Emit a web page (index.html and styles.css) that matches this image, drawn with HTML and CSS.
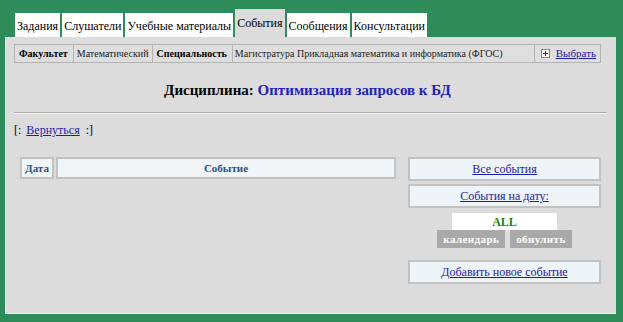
FILE: index.html
```html
<!DOCTYPE html>
<html lang="ru">
<head>
  <meta charset="UTF-8">
  <title>События</title>
  <link rel="stylesheet" href="styles.css">
</head>
<body>
  <div class="page">
    <div class="tabs">
      <a class="tab" href="#">Задания</a>
      <a class="tab" href="#">Слушатели</a>
      <a class="tab" href="#">Учебные материалы</a>
      <a class="tab active" href="#">События</a>
      <a class="tab" href="#">Сообщения</a>
      <a class="tab" href="#">Консультации</a>
    </div>
    <div class="panel">
      <table class="info">
        <tr>
          <td class="lbl">Факультет</td>
          <td class="val">Математический</td>
          <td class="lbl">Специальность</td>
          <td class="wide">Магистратура Прикладная математика и информатика (ФГОС)</td>
          <td class="pick">
            <svg class="plus" width="9" height="9" viewBox="0 0 9 9">
              <rect x="0.5" y="0.5" width="8" height="8" fill="#fff" stroke="#888"/>
              <path d="M2 4.5h5M4.5 2v5" stroke="#333" stroke-width="1"/>
            </svg>
            <a href="#">Выбрать</a>
          </td>
        </tr>
      </table>

      <h2 class="title">Дисциплина: <span>Оптимизация запросов к БД</span></h2>
      <hr class="sep">

      <div class="back">[: <a href="#">Вернуться</a> :]</div>

      <div class="events">
        <div class="ev-head">
          <div class="ev-cell date">Дата</div>
          <div class="ev-cell name">Событие</div>
        </div>
        <div class="side">
          <div class="side-box"><a href="#">Все события</a></div>
          <div class="side-box"><a href="#">События на дату:</a></div>
          <div class="date-val">ALL</div>
          <div class="date-btns">
            <span class="gbtn cal">календарь</span>
            <span class="gbtn">обнулить</span>
          </div>
          <div class="side-box add"><a href="#">Добавить новое событие</a></div>
        </div>
      </div>
    </div>
  </div>
</body>
</html>
```

FILE: styles.css
```css
body {
  margin: 0;
  background-color: #2e8c5a;
  font-family: 'Liberation Serif', 'Times New Roman', serif;
  color: #000;
}
a {
  color: #1d1daa;
}
.page {
  padding-top: 9px;
  width: 623px;
  height: 322px;
  box-sizing: border-box;
}
.tabs {
  display: flex;
  align-items: flex-end;
  gap: 2px;
  margin-left: 15px;
}
.tab {
  display: block;
  background: #fff;
  color: #000;
  text-decoration: none;
  font-size: 12px;
  line-height: 14px;
  padding: 6px 2px 4px;
}
.tab.active {
  background: #dcdcdc;
  padding: 7px 2px 7px;
}
.panel {
  margin-left: 5px;
  width: 611px;
  height: 277px;
  box-sizing: border-box;
  background: #dcdcdc;
  border-left: 1px solid #ececec;
  border-bottom: 1px solid #ececec;
  padding: 7px 15px 0 8px;
}
.info {
  width: 100%;
  border-collapse: collapse;
  border: 1px solid #b4b4b4;
  font-size: 10px;
  line-height: 13px;
}
.info td {
  border: 1px solid #b4b4b4;
  padding: 2px 3px;
  white-space: nowrap;
  width: 1%;
  background: #dedede;
  color: #222;
}
.info td.lbl {
  font-weight: bold;
  color: #000;
  padding: 2px 5px 2px 4px;
}
.info td.wide {
  width: auto;
  padding-left: 2px;
}
.info td.pick {
  padding: 2px 4px 2px 6px;
  font-size: 11px;
}
.plus {
  vertical-align: -1px;
  margin-right: 3px;
}
.title {
  margin: 18px 0 0;
  text-align: center;
  font-size: 15px;
  line-height: 18px;
}
.title span {
  color: #1f1fc4;
}
.sep {
  margin: 13px -6px 0 0;
  border: none;
  border-top: 1px solid #b0b0b0;
  border-bottom: 1px solid #f4f4f4;
  height: 0;
}
.back {
  margin-top: 9px;
  font-size: 12px;
  line-height: 14px;
}
.back a {
  margin: 0 3px 0 2px;
}
.events {
  display: flex;
  align-items: flex-start;
  gap: 12px;
  margin: 20px 0 0 6px;
}
.ev-head {
  flex: 1;
  display: flex;
  gap: 2px;
}
.ev-cell {
  background: #f0f5f9;
  border: 2px solid #c2c2c2;
  height: 22px;
  box-sizing: border-box;
  font-size: 11px;
  font-weight: bold;
  line-height: 18px;
  color: #1f5482;
  text-align: center;
}
.ev-cell.date {
  width: 34px;
}
.ev-cell.name {
  flex: 1;
}
.side {
  width: 193px;
  display: flex;
  flex-direction: column;
  align-items: center;
}
.side-box {
  align-self: stretch;
  background: #eef3f7;
  border: 2px solid #c2c2c2;
  height: 24px;
  box-sizing: border-box;
  text-align: center;
  font-size: 12px;
  line-height: 20px;
  margin-bottom: 3px;
}
.side-box + .side-box {
  margin-top: 0;
}
.date-val {
  width: 105px;
  height: 17px;
  margin-top: 2px;
  background: #fff;
  color: #16871a;
  font-weight: bold;
  font-size: 12px;
  line-height: 18px;
  text-align: center;
}
.date-btns {
  display: flex;
  gap: 5px;
  margin-bottom: 12px;
}
.gbtn {
  display: block;
  background: #a9a9a9;
  color: #fff;
  font-weight: bold;
  font-size: 11px;
  line-height: 18px;
  height: 18px;
  padding: 0 6px;
  letter-spacing: 0.4px;
}
.side-box.add {
  margin-top: 0;
}
```
